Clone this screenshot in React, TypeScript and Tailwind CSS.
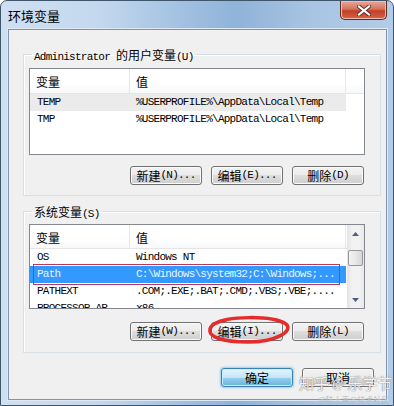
import React from 'react';

const mono = "font-['Liberation_Mono','Noto_Sans_CJK_SC',monospace] text-[11px] tracking-[-0.75px]";
const cjk = "font-['Noto_Sans_CJK_SC',sans-serif] text-[12px] tracking-normal";

type BtnProps = { zh: string; key2?: string; primary?: boolean };

const Btn: React.FC<BtnProps> = ({ zh, key2, primary }) => (
  <div
    className={
      primary
        ? 'w-[72px] h-[19px] rounded-[3px] border border-[#3c7fb1] bg-[linear-gradient(#e5f4fc,#c4e5f6_50%,#98d1ef_50%,#68b3db)] shadow-[0_0_2px_1px_#8fd3f8,inset_0_0_0_1px_#c8ecfd] flex items-center justify-center leading-none text-black'
        : 'w-[72px] h-[19px] rounded-[3px] border border-[#707070] bg-[linear-gradient(#f2f2f2,#ebebeb_50%,#dddddd_50%,#cfcfcf)] shadow-[inset_0_0_0_1px_#fbfbfb] flex items-center justify-center leading-none text-black'
    }
  >
    <span className={cjk}>{zh}</span>
    {key2 && <span className={mono}>{key2}</span>}
  </div>
);

const Header: React.FC<{ h: string }> = ({ h }) => (
  <div className={`flex ${h} bg-[linear-gradient(#ffffff,#ffffff_60%,#f7f8fa)] border-b border-[#e5e5e5] text-black`}>
    <div className="w-[100px] border-r border-[#e3e8ee] pl-[6px] pt-[2px] flex items-center">
      <span className={cjk}>变量</span>
    </div>
    <div className="w-[216px] border-r border-[#e3e8ee] pl-[6px] pt-[2px] flex items-center">
      <span className={cjk}>值</span>
    </div>
    <div className="flex-1" />
  </div>
);

type RowProps = { name: string; value: string; sel?: 'gray' | 'blue' };

const Row: React.FC<RowProps> = ({ name, value, sel }) => (
  <div
    className={`flex h-[17px] items-center ${mono} ${
      sel === 'gray' ? 'w-[316px] bg-[#ebebeb] text-black' : sel === 'blue' ? 'w-[316px] bg-[#3399ff] text-[#e6f5ff]' : 'text-black'
    } whitespace-nowrap`}
  >
    <div className="w-[100px] pl-[7px] overflow-hidden">{name}</div>
    <div className="w-[216px] pl-[6px] overflow-hidden">{value}</div>
  </div>
);

const Close = () => (
  <div className="w-[47px] h-[19px] rounded-b-[5px] border border-t-0 border-[#5b2a24] bg-[linear-gradient(#e9a898,#d4735d_45%,#c23f25_55%,#d2664a)] shadow-[inset_0_0_0_1px_#f2bdb0] flex items-center justify-center">
    <svg width="14" height="11" viewBox="0 0 14 11">
      <path d="M2 1.5 L12 9.5 M12 1.5 L2 9.5" stroke="#5a2a24" strokeWidth="4" strokeLinecap="square" />
      <path d="M2 1.5 L12 9.5 M12 1.5 L2 9.5" stroke="#ffffff" strokeWidth="2.2" strokeLinecap="square" />
    </svg>
  </div>
);

export default function App() {
  return (
    <div className="relative w-[394px] h-[406px] overflow-hidden bg-white">
      <div className="w-[394px] h-[406px] flex flex-col rounded-t-[7px] border border-[#3f556b] bg-[linear-gradient(90deg,#cfe0f2_0%,#c3d8ee_25%,#a4c2e2_45%,#8fb3d9_60%,#a9c5e3_80%,#b3cce7_100%)]">
        {/* title bar */}
        <div className="h-[28px] flex items-start shrink-0">
          <div className="pl-[7px] pt-[6px] text-[13px] leading-[18px] text-black font-['Noto_Sans_CJK_SC',sans-serif]">
            环境变量
          </div>
          <div className="ml-auto mr-[6px]">
            <Close />
          </div>
        </div>

        {/* client area */}
        <div className="flex-1 ml-[7px] mr-[6px] mb-[5px] border border-[#8095ab] bg-[#f0f0f0] flex flex-col shadow-[0_0_0_1px_#dfe9f4]">
          {/* user variables */}
          <fieldset className="ml-[14px] mt-[16px] w-[358px] border border-[#d5dfe5] shadow-[inset_1px_1px_0_#ffffff] pl-[5px] pt-[6px] pb-[10px]">
            <legend className="ml-[3px] px-[2px] h-[16px] leading-[16px] text-black">
              <span className={mono}>Administrator </span>
              <span className={cjk}>的用户变量</span>
              <span className={mono}>(U)</span>
            </legend>
            <div className="w-[336px] h-[87px] border border-[#828790] bg-white overflow-hidden">
              <Header h="h-[25px]" />
              <Row name="TEMP" value="%USERPROFILE%\AppData\Local\Temp" sel="gray" />
              <Row name="TMP" value="%USERPROFILE%\AppData\Local\Temp" />
            </div>
            <div className="w-[335px] mt-[11px] flex justify-end gap-[9px]">
              <Btn zh="新建" key2="(N)..." />
              <Btn zh="编辑" key2="(E)..." />
              <Btn zh="删除" key2="(D)" />
            </div>
          </fieldset>

          {/* system variables */}
          <fieldset className="ml-[14px] mt-[7px] w-[358px] border border-[#d5dfe5] shadow-[inset_1px_1px_0_#ffffff] pl-[5px] pt-[5px] pb-[11px]">
            <legend className="ml-[3px] px-[2px] h-[16px] leading-[16px] text-black">
              <span className={cjk}>系统变量</span>
              <span className={mono}>(S)</span>
            </legend>
            <div className="w-[336px] h-[85px] border border-[#828790] bg-white overflow-hidden flex">
              <div className="w-[317px] overflow-hidden">
                <Header h="h-[24px]" />
                <Row name="OS" value="Windows NT" />
                <div className="relative">
                  <Row name="Path" value="C:\Windows\system32;C:\Windows;..." sel="blue" />
                  <div className="absolute left-[3px] top-[-2px] w-[307px] h-[21px] border-[1.5px] border-[#b8395a]" />
                </div>
                <Row name="PATHEXT" value=".COM;.EXE;.BAT;.CMD;.VBS;.VBE;...." />
                <Row name="PROCESSOR_AR" value="x86" />
              </div>
              {/* scrollbar */}
              <div className="w-[17px] flex flex-col bg-[linear-gradient(90deg,#e3e3e3,#f2f2f2_30%,#f2f2f2_70%,#e8e8e8)]">
                <div className="h-[17px] flex items-center justify-center">
                  <svg width="7" height="4" viewBox="0 0 7 4">
                    <path d="M0 4 L3.5 0 L7 4 Z" fill="#4d6185" />
                  </svg>
                </div>
                <div className="flex-1 px-[1px]">
                  <div className="mt-[8px] h-[16px] rounded-[2px] border border-[#979797] bg-[linear-gradient(90deg,#f3f3f3,#e8e8e8_50%,#d6d6d6)]" />
                </div>
                <div className="h-[17px] flex items-center justify-center">
                  <svg width="7" height="4" viewBox="0 0 7 4">
                    <path d="M0 0 L3.5 4 L7 0 Z" fill="#4d6185" />
                  </svg>
                </div>
              </div>
            </div>
            <div className="w-[335px] mt-[13px] flex justify-end gap-[9px]">
              <Btn zh="新建" key2="(W)..." />
              <div className="relative">
                <Btn zh="编辑" key2="(I)..." />
                <svg className="absolute left-[-5px] top-[-10px] overflow-visible" width="84" height="32" viewBox="0 0 84 32">
                  <path
                    d="M8 12 C 20 4, 66 3, 80 12 C 88 19, 70 30, 42 30 C 16 30, 2 25, 4 17 C 5 13, 10 10, 20 8"
                    fill="none"
                    stroke="#e52b2b"
                    strokeWidth="3.5"
                    strokeLinecap="round"
                  />
                </svg>
              </div>
              <Btn zh="删除" key2="(L)" />
            </div>
          </fieldset>

          {/* dialog buttons */}
          <div className="mt-[15px] pr-[12px] flex justify-end gap-[9px]">
            <Btn zh="确定" primary />
            <Btn zh="取消" />
          </div>
        </div>
      </div>

      {/* watermark */}
      <div className="absolute left-[299px] top-[374px] flex items-center gap-[3px] text-[15px] leading-[18px] text-white/90 font-['Noto_Sans_CJK_SC',sans-serif] [text-shadow:0_0_1px_#777,0_0_1px_#777]">
        <span>知乎</span>
        <span className="text-[13px]">@</span>
        <span>乐学节</span>
      </div>
      <div className="absolute left-[318px] top-[395px] text-[8px] leading-[10px] text-[#b5bcc4] font-['Noto_Sans_CJK_SC',sans-serif]">
        @陆土真@技术社区
      </div>
    </div>
  );
}
